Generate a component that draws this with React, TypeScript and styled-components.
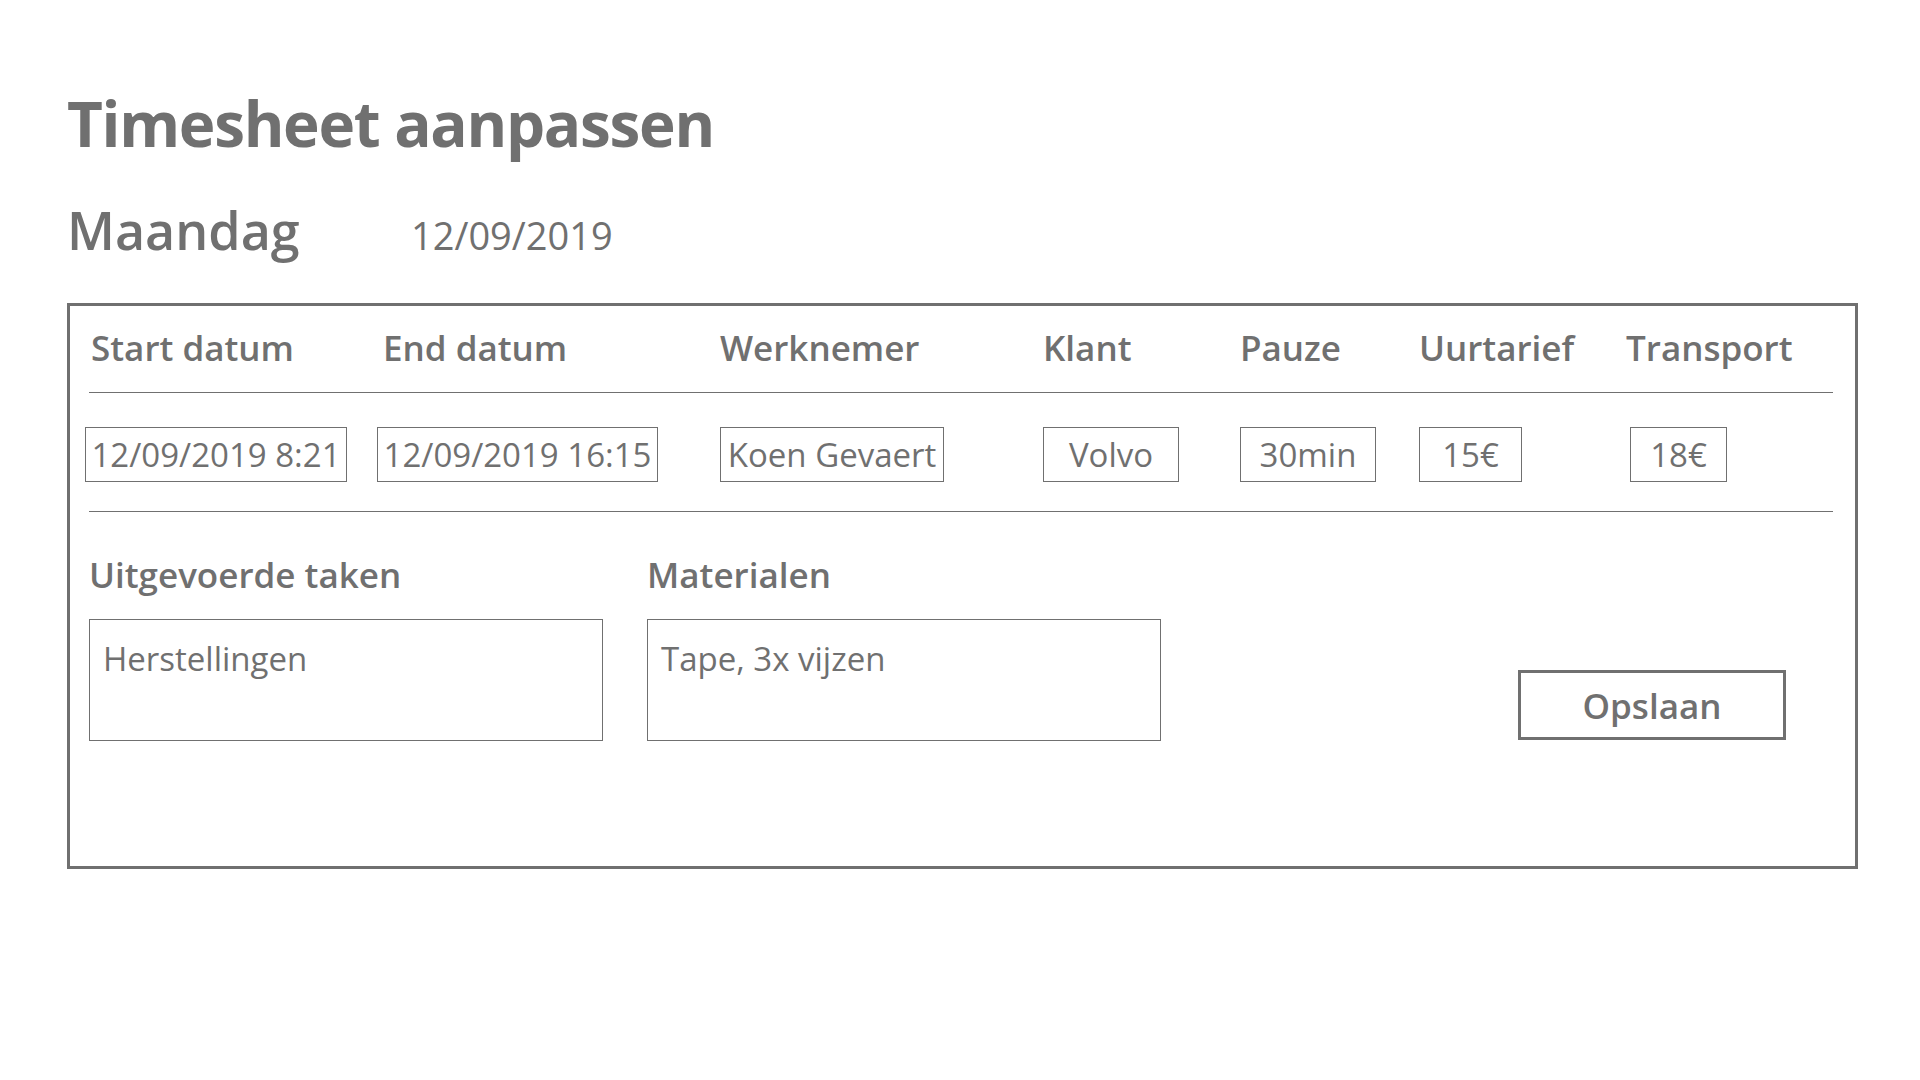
import React from "react";
import styled, { createGlobalStyle } from "styled-components";

const GlobalStyle = createGlobalStyle`
  html, body {
    margin: 0;
    padding: 0;
    background: #ffffff;
  }
  body {
    font-family: "Open Sans", "Noto Sans", "Liberation Sans", sans-serif;
    color: #707070;
  }
  * {
    box-sizing: border-box;
  }
`;

const Page = styled.div`
  width: 1920px;
  height: 1080px;
  padding: 80px 62px 0 67px;
`;

const Title = styled.h1`
  margin: 0;
  font-size: 62px;
  font-weight: 700;
  letter-spacing: -1.3px;
  line-height: 86px;
  color: #707070;
`;

const DayRow = styled.div`
  display: flex;
  align-items: baseline;
  margin-top: 28px;
  height: 72px;
`;

const DayName = styled.h2`
  margin: 0;
  font-size: 52px;
  font-weight: 600;
  width: 344px;
  line-height: 72px;
`;

const DayDate = styled.span`
  font-size: 38px;
  font-weight: 400;
`;

const Panel = styled.section`
  margin-top: 37px;
  width: 1791px;
  border: 3px solid #707070;
  padding: 18px 22px 125px 15px;
`;

const Grid = styled.div`
  display: grid;
  grid-template-columns: 292px 343px 323px 197px 179px 207px 1fr;
  align-items: center;
`;

const HeaderCell = styled.div<{ $shift?: number }>`
  font-size: 35px;
  font-weight: 600;
  line-height: 48px;
  padding-left: ${(p) => p.$shift ?? 0}px;
  white-space: nowrap;
`;

const Divider = styled.div<{ $top: number }>`
  height: 1px;
  background: #707070;
  margin: ${(p) => p.$top}px 0 0 4px;
`;

const ValueRow = styled(Grid)`
  margin-top: 34px;
`;

const ValueBox = styled.input<{ $width: number; $shift?: number }>`
  width: ${(p) => p.$width}px;
  height: 55px;
  margin-left: ${(p) => p.$shift ?? 0}px;
  border: 1px solid #707070;
  border-radius: 0;
  padding: 0;
  font-family: inherit;
  font-size: 33px;
  font-weight: 400;
  color: #707070;
  text-align: center;
  background: #fff;
  outline: none;
`;

const Bottom = styled.div`
  display: flex;
  align-items: flex-end;
  margin: 39px 0 0 4px;
`;

const Field = styled.div`
  width: 514px;
  margin-right: 44px;
  display: flex;
  flex-direction: column;
`;

const FieldLabel = styled.label`
  font-size: 35px;
  font-weight: 600;
  line-height: 48px;
  margin-bottom: 20px;
  white-space: nowrap;
`;

const TextBox = styled.textarea`
  width: 514px;
  height: 122px;
  border: 1px solid #707070;
  border-radius: 0;
  padding: 15px 13px 0;
  font-family: inherit;
  font-size: 33px;
  line-height: 48px;
  font-weight: 400;
  color: #707070;
  resize: none;
  outline: none;
`;

const SaveButton = styled.button`
  margin-left: auto;
  margin-right: 47px;
  margin-bottom: 1px;
  width: 268px;
  height: 70px;
  border: 3px solid #707070;
  background: #fff;
  font-family: inherit;
  font-size: 35px;
  font-weight: 600;
  color: #707070;
  padding: 0;
  cursor: pointer;
`;

const columns = [
  { label: "Start datum", value: "12/09/2019 8:21", width: 262, shift: 6 },
  { label: "End datum", value: "12/09/2019 16:15", width: 281, shift: 6 },
  { label: "Werknemer", value: "Koen Gevaert", width: 224 },
  { label: "Klant", value: "Volvo", width: 136 },
  { label: "Pauze", value: "30min", width: 136 },
  { label: "Uurtarief", value: "15€", width: 103 },
  { label: "Transport", value: "18€", width: 97, boxShift: 4 },
];

export default function App() {
  return (
    <>
      <GlobalStyle />
      <Page>
        <Title>Timesheet aanpassen</Title>
        <DayRow>
          <DayName>Maandag</DayName>
          <DayDate>12/09/2019</DayDate>
        </DayRow>
        <Panel>
          <Grid>
            {columns.map((c) => (
              <HeaderCell key={c.label} $shift={c.shift}>
                {c.label}
              </HeaderCell>
            ))}
          </Grid>
          <Divider $top={20} />
          <ValueRow>
            {columns.map((c) => (
              <div key={c.label}>
                <ValueBox
                  $width={c.width}
                  $shift={c.boxShift}
                  defaultValue={c.value}
                  readOnly
                />
              </div>
            ))}
          </ValueRow>
          <Divider $top={29} />
          <Bottom>
            <Field>
              <FieldLabel>Uitgevoerde taken</FieldLabel>
              <TextBox defaultValue="Herstellingen" readOnly />
            </Field>
            <Field>
              <FieldLabel>Materialen</FieldLabel>
              <TextBox defaultValue="Tape, 3x vijzen" readOnly />
            </Field>
            <SaveButton>Opslaan</SaveButton>
          </Bottom>
        </Panel>
      </Page>
    </>
  );
}
